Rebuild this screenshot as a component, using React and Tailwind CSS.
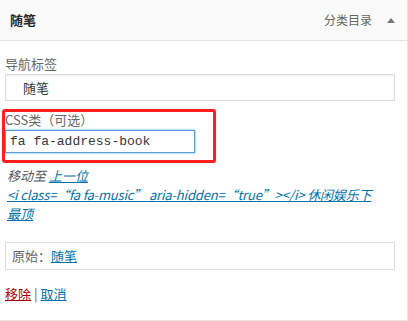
export default function App() {
  const font = { fontFamily: '"Noto Sans CJK SC", "Noto Sans", sans-serif' };
  return (
    <div
      className="relative w-[408px] h-[321px] bg-white border-r border-b border-[#e5e5e5] text-[13px] text-[#444]"
      style={font}
    >
      <div className="h-[41px] bg-[#fafafa] border-b border-[#e5e5e5] flex items-center pl-[10px] pr-[12px]">
        <span className="font-semibold text-[#23282d] text-[13px]">随笔</span>
        <span className="ml-auto text-[12px] text-[#666]">分类目录</span>
        <span className="ml-[15px] w-0 h-0 border-l-[4px] border-r-[4px] border-b-[5px] border-l-transparent border-r-transparent border-b-[#72777c]"></span>
      </div>
      <div className="px-[5px] pt-[13px] pr-[12px]">
        <label className="block leading-[20px] text-[#666]">导航标签</label>
        <div className="h-[27px] border border-[#ddd] shadow-[inset_0_1px_2px_rgba(0,0,0,0.07)] flex items-center pl-[17px] text-[#32373c]">
          随笔
        </div>
        <label className="block mt-[9px] leading-[20px] text-[#666]">CSS类（可选）</label>
        <div
          className="w-[190px] h-[23px] border border-[#5b9dd9] shadow-[0_0_2px_rgba(30,140,190,0.8)] flex items-center pl-[4px] pt-[1px] text-[#32373c]"
          style={{ fontFamily: '"Liberation Mono", monospace' }}
        >
          fa fa-address-book
        </div>
        <div className="mt-[13px] italic leading-[19px] pl-[2px] text-[#555]">
          <span>移动至</span>{" "}
          <a className="text-[#0073aa] underline">上一位</a>
          <br />
          <a className="text-[#0073aa] underline tracking-[-0.17px]">
            {'<i class=“fa fa-music” aria-hidden=“true”></i> 休闲娱乐下'}
          </a>
          <br />
          <a className="text-[#0073aa] underline">最顶</a>
        </div>
        <div className="mt-[19px] h-[28px] border border-[#ddd] flex items-center pl-[6px] text-[#666]">
          <span>原始：</span>
          <a className="text-[#0073aa] underline">随笔</a>
        </div>
        <div className="mt-[14px] leading-[20px]">
          <a className="text-[#a00] underline">移除</a>
          <span className="text-[#666] mx-[3px]">|</span>
          <a className="text-[#0073aa] underline">取消</a>
        </div>
      </div>
      <div className="absolute left-[2px] top-[109px] w-[214px] h-[54px] border-[3px] border-[#ff1f1f] rounded-[3px] pointer-events-none"></div>
    </div>
  );
}
